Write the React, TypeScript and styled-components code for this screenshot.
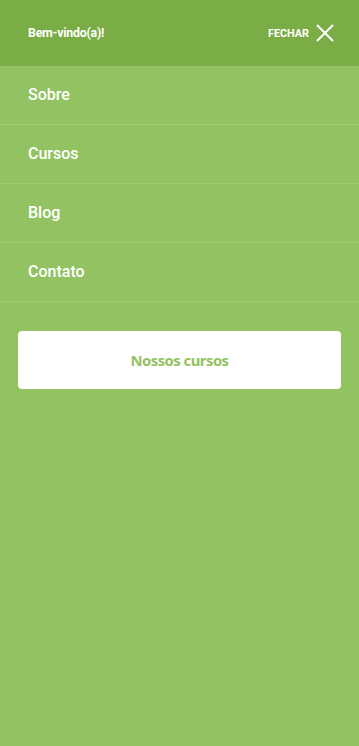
import React from 'react'
import styled, { createGlobalStyle } from 'styled-components'

const GlobalStyle = createGlobalStyle`
    html, body {
        margin: 0;
        padding: 0;
        background: #92c262;
    }
    * {
        box-sizing: border-box;
    }
`

const Drawer = styled.div`
    display: flex;
    flex-direction: column;
    min-height: 746px;
    background: #92c262;
    font-family: Roboto, 'Liberation Sans', sans-serif;
    color: #ffffff;
`

const Header = styled.header`
    display: flex;
    align-items: center;
    justify-content: space-between;
    height: 66px;
    padding: 0 24px 0 28px;
    background: #7aad45;
`

const Welcome = styled.span`
    font-size: 12.3px;
    font-weight: 700;
    letter-spacing: -0.2px;
`

const CloseButton = styled.button`
    display: flex;
    align-items: center;
    gap: 6px;
    padding: 0;
    border: 0;
    background: none;
    color: #ffffff;
    font-family: Roboto, 'Liberation Sans', sans-serif;
    font-size: 10.8px;
    font-weight: 700;
    cursor: pointer;
`

const Nav = styled.nav`
    display: flex;
    flex-direction: column;
`

const NavItem = styled.a`
    display: flex;
    align-items: center;
    height: 59px;
    padding: 0 28px 1px;
    border-bottom: 1px solid #9fca73;
    color: #ffffff;
    font-size: 16px;
    font-weight: 500;
    text-decoration: none;
`

const Actions = styled.div`
    padding: 29px 18px;
`

const CoursesButton = styled.button`
    width: 100%;
    height: 58px;
    border: 0;
    border-radius: 4px;
    background: #ffffff;
    color: #92c262;
    font-family: 'Noto Sans', 'Open Sans', sans-serif;
    font-size: 14.8px;
    font-weight: 700;
    letter-spacing: -0.5px;
    cursor: pointer;
`

const links = ['Sobre', 'Cursos', 'Blog', 'Contato']

function App(): JSX.Element {
    return (
        <>
            <GlobalStyle />
            <Drawer>
                <Header>
                    <Welcome>Bem-vindo(a)!</Welcome>
                    <CloseButton>
                        FECHAR
                        <svg width="20" height="20" viewBox="0 0 20 20" fill="none">
                            <path d="M2 2L18 18M18 2L2 18" stroke="#fff" strokeWidth="2" />
                        </svg>
                    </CloseButton>
                </Header>
                <Nav>
                    {links.map(l => (
                        <NavItem key={l} href="#">
                            {l}
                        </NavItem>
                    ))}
                </Nav>
                <Actions>
                    <CoursesButton>Nossos cursos</CoursesButton>
                </Actions>
            </Drawer>
        </>
    )
}

export default App
